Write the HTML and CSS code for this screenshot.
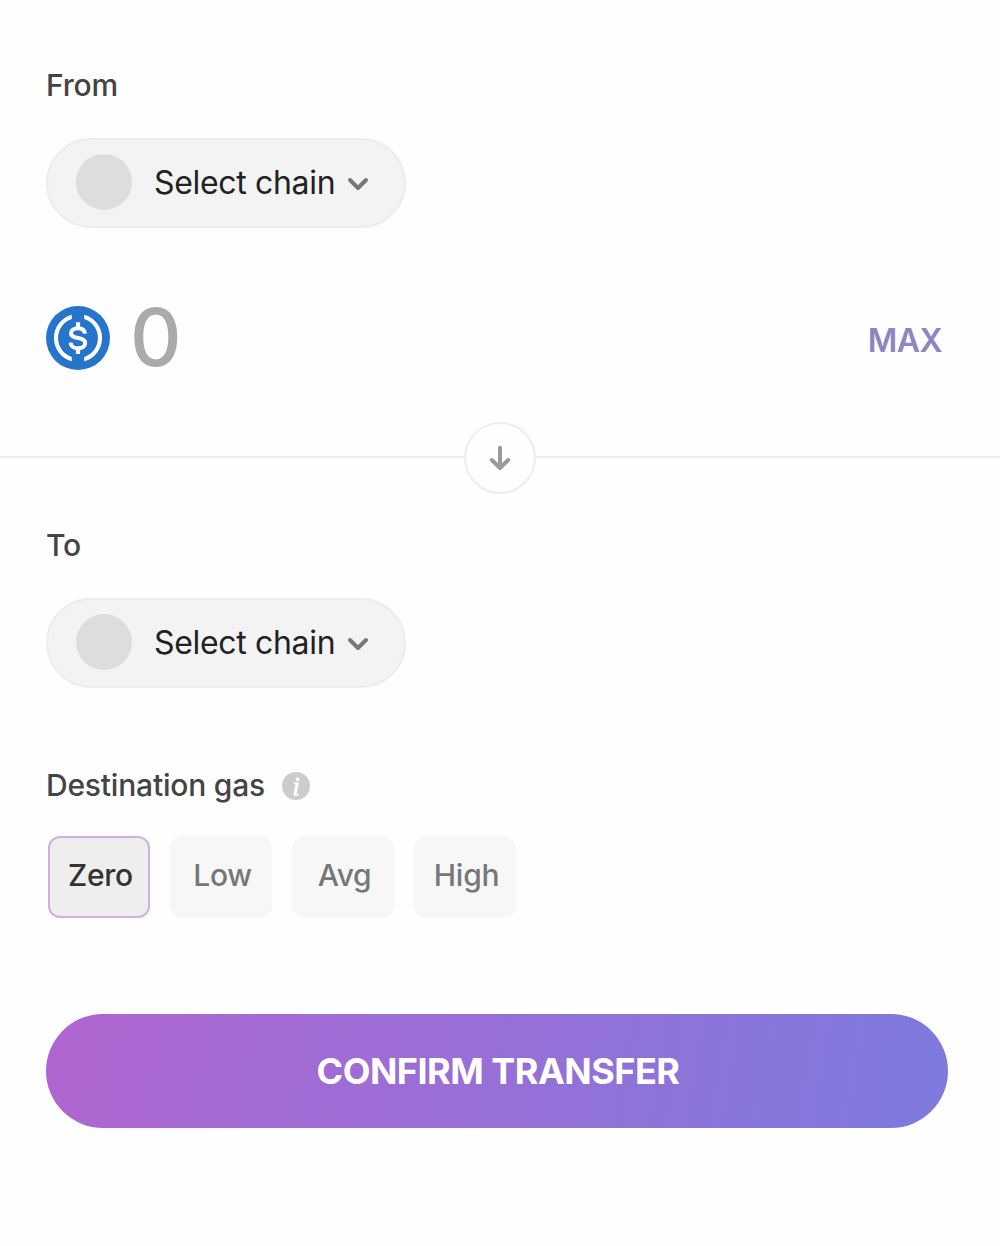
FILE: index.html
```html
<!DOCTYPE html>
<html lang="en">
<head>
<meta charset="utf-8">
<title>Transfer</title>
<link rel="stylesheet" href="styles.css">
</head>
<body>
<main class="transfer">
  <section class="panel">
    <h2 class="label">From</h2>
    <button class="chain" type="button">
      <span class="chain-logo"></span>
      <span class="chain-name">Select chain</span>
      <svg class="chevron" width="24" height="16" viewBox="0 0 24 16"><path d="M4 4l8 8 8-8"/></svg>
    </button>
    <div class="amount">
      <svg class="usdc" width="64" height="64" viewBox="0 0 64 64">
        <circle cx="32" cy="32" r="32" fill="#2775ca"/>
        <path fill="#fff" d="M25.8 8.8A24 24 0 0 0 25.8 55.2V51A20 20 0 0 1 25.8 13ZM38.2 8.8A24 24 0 0 1 38.2 55.2V51A20 20 0 0 0 38.2 13Z"/>
        <path fill="none" stroke="#fff" stroke-width="4.2" d="M32 16.2V22M32 42V48"/>
        <path fill="none" stroke="#fff" stroke-width="4" d="M39 27.6C38.6 24 35.8 22.2 32 22.2C27.8 22.2 25 24.3 25 27.2C25 30.4 28 31.2 32 32C36.2 32.8 39.2 33.7 39.2 37C39.2 40.4 36.2 42.3 32 42.3C27.8 42.3 25 40.3 24.6 36.6"/>
      </svg>
      <span class="value">0</span>
      <button class="max" type="button">MAX</button>
    </div>
  </section>
  <div class="divider">
    <span class="swap"><svg width="24" height="28" viewBox="0 0 24 28"><path d="M12 3.8V24M3.8 16l8.2 8 8.2-8"/></svg></span>
  </div>
  <section class="panel">
    <h2 class="label">To</h2>
    <button class="chain" type="button">
      <span class="chain-logo"></span>
      <span class="chain-name">Select chain</span>
      <svg class="chevron" width="24" height="16" viewBox="0 0 24 16"><path d="M4 4l8 8 8-8"/></svg>
    </button>
    <div class="gas-heading">
      <h2 class="label">Destination gas</h2>
      <span class="info">i</span>
    </div>
    <div class="gas-options">
      <button class="gas selected" type="button">Zero</button>
      <button class="gas" type="button">Low</button>
      <button class="gas" type="button">Avg</button>
      <button class="gas" type="button">High</button>
    </div>
    <button class="confirm" type="button">CONFIRM TRANSFER</button>
  </section>
</main>
</body>
</html>
```
FILE: styles.css
```css
* { box-sizing: border-box; }
body { margin: 0; background: #fefefe; font-family: Inter, "Liberation Sans", sans-serif; }
button { margin: 0; padding: 0; border: 0; background: none; font: inherit; }
svg { display: block; flex: none; }
.transfer { width: 1000px; height: 1246px; padding-top: 66px; }
.panel { display: flex; flex-direction: column; align-items: flex-start; padding: 0 52px 0 46px; }
.label { margin: 0; height: 40px; font-size: 30px; line-height: 38px; font-weight: 500; letter-spacing: -0.2px; color: #444; white-space: nowrap; }
.chain { display: flex; align-items: center; width: 360px; height: 90px; margin-top: 32px; padding: 0 0 2px 28px; border: 2px solid #ededed; border-radius: 45px; background: #f3f3f3; }
.chain-logo { width: 56px; height: 56px; border-radius: 50%; background: #ddd; }
.chain-name { width: 180px; margin: 2px 0 0 22px; font-size: 32px; line-height: 40px; letter-spacing: -0.33px; color: #222; text-align: left; white-space: nowrap; }
.chevron { margin: 4px 0 0 12px; fill: none; stroke: #777; stroke-width: 4; stroke-linecap: round; stroke-linejoin: round; }
.amount { display: flex; align-items: center; width: 100%; height: 64px; margin-top: 78px; }
.value { margin: -2px 0 0 20px; font-size: 80px; line-height: 64px; font-weight: 500; color: #aaa; }
.max { margin: 6px 6px 0 auto; font-size: 32px; line-height: 40px; font-weight: 600; letter-spacing: -0.5px; color: #8e86c1; }
.divider { display: flex; align-items: center; height: 72px; margin: 52px 0 32px; }
.divider::before, .divider::after { content: ""; flex: 1; height: 2px; margin-top: -2px; background: #ededed; }
.swap { display: flex; align-items: center; justify-content: center; width: 72px; height: 72px; border: 2px solid #ededed; border-radius: 50%; }
.swap svg { fill: none; stroke: #999; stroke-width: 4; stroke-linecap: round; stroke-linejoin: round; }
.gas-heading { display: flex; align-items: center; gap: 17px; margin-top: 78px; }
.info { width: 28px; height: 28px; border-radius: 50%; background: #ccc; color: #fff; font: italic 26px/29px "Liberation Serif", serif; -webkit-text-stroke: 0.8px #fff; text-align: center; }
.gas-options { display: flex; gap: 20px; margin: 30px 0 0 2px; }
.gas { width: 102px; height: 82px; padding: 0 0 5px 3px; border-radius: 12px; background: #f7f7f7; color: #777; font-size: 30px; font-weight: 500; letter-spacing: -0.3px; }
.gas.selected { border: 2px solid #d1b0e0; background: #eee; color: #333; }
.confirm { width: 902px; height: 114px; margin-top: 96px; padding-left: 2px; border-radius: 57px; background: linear-gradient(100deg, #b065d0, #7d7add); color: #fff; font-size: 36px; font-weight: 700; letter-spacing: -0.5px; white-space: nowrap; }
```
